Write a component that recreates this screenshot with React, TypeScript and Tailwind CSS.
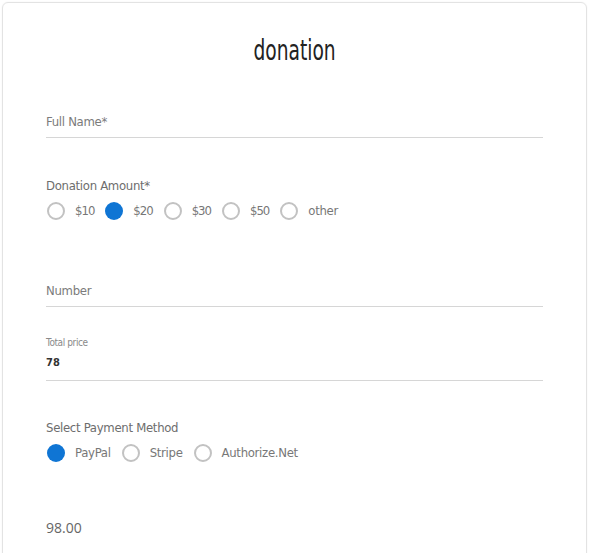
import { useState } from 'react'

const FONT = "font-['Liberation_Sans_Narrow','DejaVu_Sans_Condensed',sans-serif]"

function Radio({
  checked,
  label,
  tight,
  onClick,
}: {
  checked: boolean
  label: string
  tight?: boolean
  onClick: () => void
}) {
  return (
    <button
      type="button"
      onClick={onClick}
      className="flex items-center gap-[10px] bg-transparent border-none p-0 cursor-pointer"
    >
      <span
        className={
          checked
            ? 'w-[18px] h-[18px] rounded-full bg-[#0f75d4] shrink-0'
            : 'w-[18px] h-[18px] rounded-full border-2 border-[#c2c2c2] shrink-0'
        }
      />
      <span
        className={
          tight
            ? 'text-[13px] leading-[20px] text-[#777] tracking-[-1px]'
            : 'text-[13px] leading-[20px] text-[#777] tracking-[-0.3px]'
        }
      >
        {label}
      </span>
    </button>
  )
}

export default function App() {
  const [amount, setAmount] = useState('$20')
  const [method, setMethod] = useState('PayPal')

  return (
    <div className={`bg-white h-[553px] overflow-hidden pt-[2px] px-[2px] ${FONT}`}>
      <div className="border border-[#e3e3e3] rounded-md shadow-[0_0_2px_rgba(0,0,0,0.06)] px-[43px] pt-[26px] pb-[40px] flex flex-col">
        {/* Title */}
        <h1 className="h-[44px] leading-[44px] text-center text-[28px] font-normal text-[#222] m-0">
          <span className="inline-block scale-x-[0.74]">donation</span>
        </h1>

        {/* Full name */}
        <div className="mt-[38px] pt-[1px] pb-[5px] border-b border-[#d6d6d6]">
          <span className="block text-[13px] leading-[20px] text-[#7b7b7b] tracking-[-0.3px]">
            Full Name*
          </span>
        </div>

        {/* Donation amount */}
        <span className="mt-[38px] block text-[13px] leading-[20px] text-[#6d6d6d] tracking-[-0.3px]">
          Donation Amount*
        </span>
        <div className="mt-[5px] ml-[1px] flex items-center gap-[11px]">
          {['$10', '$20', '$30', '$50', 'other'].map((a) => (
            <Radio
              key={a}
              label={a}
              tight={a !== 'other'}
              checked={amount === a}
              onClick={() => setAmount(a)}
            />
          ))}
        </div>

        {/* Number */}
        <div className="mt-[60px] pb-[5px] border-b border-[#d6d6d6]">
          <span className="block text-[13px] leading-[20px] text-[#7b7b7b] tracking-[-0.3px]">
            Number
          </span>
        </div>

        {/* Total price */}
        <div className="mt-[29px] pb-[9px] border-b border-[#d6d6d6]">
          <span className="block text-[10px] leading-[14px] text-[#8a8a8a] tracking-[-0.4px]">
            Total price
          </span>
          <span className="mt-[5px] block text-[11px] leading-[16px] font-bold text-[#333]">78</span>
        </div>

        {/* Payment method */}
        <span className="mt-[37px] block text-[13px] leading-[20px] text-[#6d6d6d] tracking-[-0.3px]">
          Select Payment Method
        </span>
        <div className="mt-[5px] ml-[1px] flex items-center gap-[11px]">
          {['PayPal', 'Stripe', 'Authorize.Net'].map((m) => (
            <Radio key={m} label={m} checked={method === m} onClick={() => setMethod(m)} />
          ))}
        </div>

        {/* Amount */}
        <span className="mt-[55px] block text-[14px] leading-[20px] text-[#666] font-['Open_Sans',sans-serif]">
          98.00
        </span>
      </div>
    </div>
  )
}
